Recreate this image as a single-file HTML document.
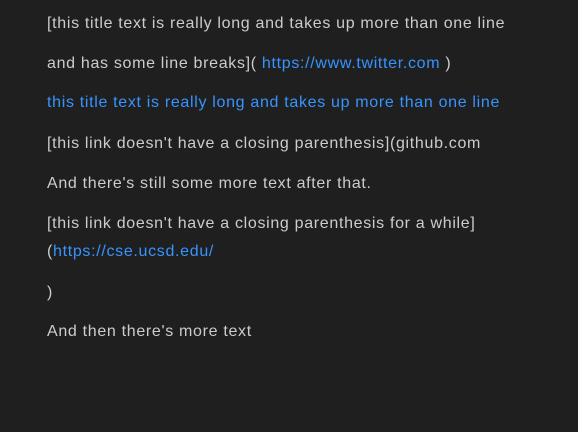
<!DOCTYPE html>
<html><head><style>
html,body{margin:0;padding:0;background:#1f1f1f;width:578px;height:432px;overflow:hidden}
body{font-family:"Liberation Sans",sans-serif;font-size:16px;letter-spacing:0.68px;color:#cccccc}
div{position:absolute;left:47px;white-space:nowrap;line-height:20px}
a{color:#3794ff;text-decoration:none}
</style></head><body>
<div style="top:14px">[this title text is really long and takes up more than one line</div>
<div style="top:54px">and has some line breaks]( <a>https://www.twitter.com</a> )</div>
<div style="top:93px"><a>this title text is really long and takes up more than one line</a></div>
<div style="top:134px">[this link doesn't have a closing parenthesis](github.com</div>
<div style="top:174px">And there's still some more text after that.</div>
<div style="top:214px">[this link doesn't have a closing parenthesis for a while]</div>
<div style="top:242px">(<a>https://cse.ucsd.edu/</a></div>
<div style="top:283px">)</div>
<div style="top:322px">And then there's more text</div>
</body></html>
